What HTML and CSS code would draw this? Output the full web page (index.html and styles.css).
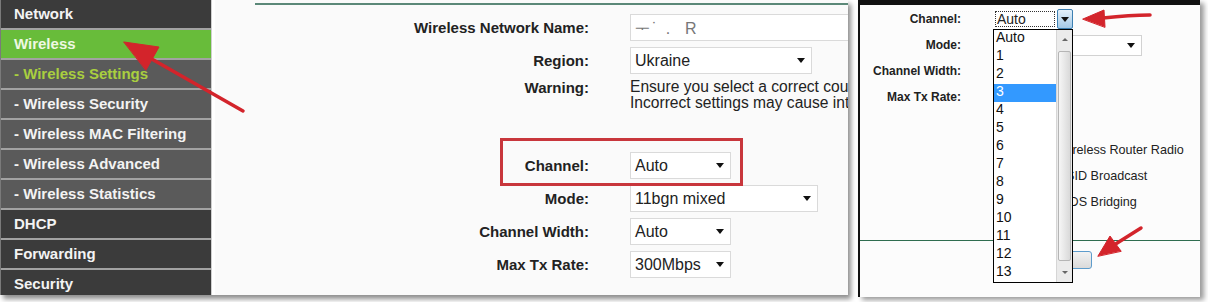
FILE: index.html
```html
<!DOCTYPE html>
<html>
<head>
  <meta charset="utf-8">
  <meta name="viewport" content="width=device-width, initial-scale=1">
  <title>Wireless Settings</title>
  <link rel="stylesheet" href="styles.css">
</head>
<body>
  <div class="shot">
    <!-- router web interface, left part -->
    <div class="router">
      <ul class="menu">
        <li class="top">Network</li>
        <li class="top active">Wireless</li>
        <li class="sub current">- Wireless Settings</li>
        <li class="sub">- Wireless Security</li>
        <li class="sub">- Wireless MAC Filtering</li>
        <li class="sub">- Wireless Advanced</li>
        <li class="sub">- Wireless Statistics</li>
        <li class="top">DHCP</li>
        <li class="top">Forwarding</li>
        <li class="top">Security</li>
      </ul>

      <div class="page">
        <div class="rule"></div>
        <div class="row">
          <label>Wireless Network Name:</label>
          <div class="field name"><span class="ssid">ᅮ˙ .&nbsp; R</span></div>
        </div>
        <div class="row">
          <label>Region:</label>
          <div class="field region"><span>Ukraine</span><i class="caret"></i></div>
        </div>
        <div class="row warn">
          <label>Warning:</label>
          <p class="note">Ensure you select a correct country to conform local law.<br>Incorrect settings may cause interference.</p>
        </div>
        <div class="row">
          <label>Channel:</label>
          <div class="field short"><span>Auto</span><i class="caret"></i></div>
        </div>
        <div class="row">
          <label>Mode:</label>
          <div class="field mode"><span>11bgn mixed</span><i class="caret"></i></div>
        </div>
        <div class="row">
          <label>Channel Width:</label>
          <div class="field short"><span>Auto</span><i class="caret"></i></div>
        </div>
        <div class="row">
          <label>Max Tx Rate:</label>
          <div class="field short"><span>300Mbps</span><i class="caret"></i></div>
        </div>
        <div class="mark"></div>
      </div>
    </div>

    <!-- open channel list, right part -->
    <div class="popup">
      <div class="prow">
        <label>Channel:</label>
        <div class="combo">
          <span class="value">Auto</span>
          <span class="btn"><i class="caret"></i></span>
        </div>
      </div>
      <div class="prow">
        <label>Mode:</label>
        <div class="pselect"><i class="caret"></i></div>
      </div>
      <div class="prow">
        <label>Channel Width:</label>
        <span></span>
      </div>
      <div class="prow">
        <label>Max Tx Rate:</label>
        <span></span>
      </div>
      <div class="pgap"></div>
      <div class="prow">
        <span></span>
        <div class="check"><i class="box"></i>Enable Wireless Router Radio</div>
      </div>
      <div class="prow">
        <span></span>
        <div class="check"><i class="box"></i>Enable SSID Broadcast</div>
      </div>
      <div class="prow">
        <span></span>
        <div class="check"><i class="box"></i>Enable WDS Bridging</div>
      </div>
      <div class="pline"></div>
      <div class="save"></div>

      <div class="list">
        <ul class="opts">
          <li>Auto</li>
          <li>1</li>
          <li>2</li>
          <li class="sel">3</li>
          <li>4</li>
          <li>5</li>
          <li>6</li>
          <li>7</li>
          <li>8</li>
          <li>9</li>
          <li>10</li>
          <li>11</li>
          <li>12</li>
          <li>13</li>
        </ul>
        <div class="scroll">
          <span class="up"></span>
          <span class="thumb"></span>
          <span class="down"></span>
        </div>
      </div>
    </div>

    <!-- red hand-drawn arrows -->
    <svg class="arrows" width="1208" height="302" viewBox="0 0 1208 302">
      <g fill="#d3242b" stroke="#d3242b" stroke-linecap="round">
        <path d="M243 111 L150 58" stroke-width="3.5" fill="none"/>
        <path d="M124 42 L159 47 L146 70 Z" stroke-width="1"/>
        <path d="M1150 15 Q1130 15 1103 18" stroke-width="3.5" fill="none"/>
        <path d="M1083 19 L1104 10 L1105 27 Z" stroke-width="1"/>
        <path d="M1141 228 L1114 245" stroke-width="3.5" fill="none"/>
        <path d="M1098 256 L1110 236 L1121 251 Z" stroke-width="1"/>
      </g>
    </svg>
  </div>
</body>
</html>
```

FILE: styles.css
```css
* {
  box-sizing: border-box;
}

body {
  margin: 0;
  padding: 0;
  background: #fff;
  font-family: "Liberation Sans", Arial, sans-serif;
  color: #222;
}

.shot {
  position: relative;
  width: 1208px;
  height: 302px;
  display: flex;
  align-items: flex-start;
  overflow: hidden;
}

/* left: router page */
.router {
  width: 848px;
  height: 295px;
  display: flex;
  background: #fff;
  box-shadow: 3px 4px 5px rgba(0, 0, 0, 0.45);
  overflow: hidden;
}

.menu {
  width: 212px;
  margin: 0;
  padding: 0;
  list-style: none;
  background: #3a3a3a;
  border-left: 1px solid #7a7a7a;
  border-right: 1px solid #cfcfcf;
}

.menu li {
  height: 30px;
  line-height: 28px;
  padding-left: 13px;
  border-bottom: 2px solid #a2a2a2;
  font-size: 15px;
  font-weight: bold;
  color: #f3f3f3;
  white-space: nowrap;
}

.menu .top {
  background: #3b3b3b;
}

.menu .sub {
  background: #5a5a5a;
}

.menu .active {
  background: #68bc3a;
  color: #eef8e2;
}

.menu .current {
  color: #a9cf3f;
}

.page {
  position: relative;
  flex: 1;
  margin-left: 3px;
  padding-top: 3px;
  background: #fafafa;
  overflow: hidden;
}

.rule {
  height: 2px;
  margin: 0 0 6px 40px;
  background: #5b8878;
}

.row {
  display: grid;
  grid-template-columns: 374px 1fr;
  column-gap: 41px;
  align-items: center;
  height: 33px;
}

.row label {
  text-align: right;
  font-size: 15px;
  font-weight: bold;
  color: #222;
  white-space: nowrap;
}

.row.warn {
  height: 72px;
  align-items: start;
}

.row.warn label {
  padding-top: 2px;
}

.note {
  margin: 0;
  padding-top: 2px;
  font-size: 15.6px;
  line-height: 16px;
  color: #222;
  white-space: nowrap;
}

.field {
  height: 27px;
  display: flex;
  align-items: center;
  justify-content: space-between;
  padding: 0 6px 0 4px;
  background: #fff;
  border: 1px solid #dadada;
  font-size: 16px;
  color: #222;
  white-space: nowrap;
}

.field.name {
  width: 260px;
}

.ssid {
  color: #777;
  letter-spacing: 2px;
}

.field.region {
  width: 182px;
}

.field.short {
  width: 101px;
}

.field.mode {
  width: 188px;
}

.caret {
  width: 0;
  height: 0;
  border-left: 4px solid transparent;
  border-right: 4px solid transparent;
  border-top: 5px solid #111;
}

.mark {
  position: absolute;
  left: 285px;
  top: 138px;
  width: 243px;
  height: 48px;
  border: 3px solid #c8363c;
}

/* right: opened drop-down */
.popup {
  position: relative;
  width: 342px;
  height: 297px;
  margin-left: 10px;
  padding-top: 1px;
  background: #fcfcfc;
  border-top: 5px solid #111;
  border-left: 2px solid #111;
  box-shadow: 4px 3px 5px rgba(0, 0, 0, 0.4);
}

.prow {
  display: grid;
  grid-template-columns: 101px 1fr;
  column-gap: 32px;
  align-items: center;
  height: 26px;
}

.prow label {
  text-align: right;
  font-size: 12px;
  font-weight: bold;
  color: #222;
  white-space: nowrap;
}

.combo {
  width: 80px;
  height: 20px;
  display: flex;
  background: #fff;
}

.combo .value {
  flex: 1;
  margin: 2px;
  border: 1px dotted #333;
  font-size: 14px;
  line-height: 14px;
  padding-left: 1px;
}

.combo .btn {
  width: 16px;
  display: flex;
  align-items: center;
  justify-content: center;
  border: 1px solid #3c7fb1;
  border-radius: 2px;
  background: linear-gradient(#e3f0fa, #a4c9e6);
}

.pselect {
  width: 149px;
  height: 21px;
  display: flex;
  align-items: center;
  justify-content: flex-end;
  padding-right: 6px;
  background: #fff;
  border: 1px solid #d2d2d2;
}

.pgap {
  height: 27px;
}

.check {
  display: flex;
  align-items: center;
  font-size: 12.6px;
  color: #222;
  white-space: nowrap;
}

.check .box {
  width: 13px;
  height: 13px;
  margin-right: 9px;
  border: 1px solid #888;
  background: #fff;
}

.pline {
  height: 1px;
  margin-top: 25px;
  background: #2f6d50;
}

.save {
  width: 52px;
  height: 18px;
  margin: 10px 0 0 180px;
  border: 1px solid #5d9ccc;
  border-radius: 3px;
  background: linear-gradient(#f2f2f2, #dadada);
}

.list {
  position: absolute;
  left: 133px;
  top: 24px;
  width: 80px;
  height: 254px;
  display: flex;
  background: #fff;
  border: 1px solid #000;
}

.opts {
  flex: 1;
  margin: 0;
  padding: 0;
  list-style: none;
}

.opts li {
  height: 18px;
  line-height: 15px;
  padding-left: 2px;
  font-size: 14px;
  color: #111;
}

.opts .sel {
  background: #3399ff;
  color: #fff;
}

.scroll {
  width: 16px;
  display: flex;
  flex-direction: column;
  background: #ebebeb;
  border-left: 1px solid #d6d6d6;
}

.scroll .up,
.scroll .down {
  height: 19px;
  display: flex;
  align-items: center;
  justify-content: center;
}

.scroll .up::after {
  content: "";
  border-left: 3px solid transparent;
  border-right: 3px solid transparent;
  border-bottom: 3px solid #666;
}

.scroll .down::after {
  content: "";
  border-left: 3px solid transparent;
  border-right: 3px solid transparent;
  border-top: 3px solid #666;
}

.scroll .thumb {
  flex: 1;
  margin: 2px 1px;
  border: 1px solid #b5b5b5;
  border-radius: 2px;
  background: linear-gradient(to right, #f6f6f6, #d9d9d9);
}

.arrows {
  position: absolute;
  left: 0;
  top: 0;
  pointer-events: none;
}
```
